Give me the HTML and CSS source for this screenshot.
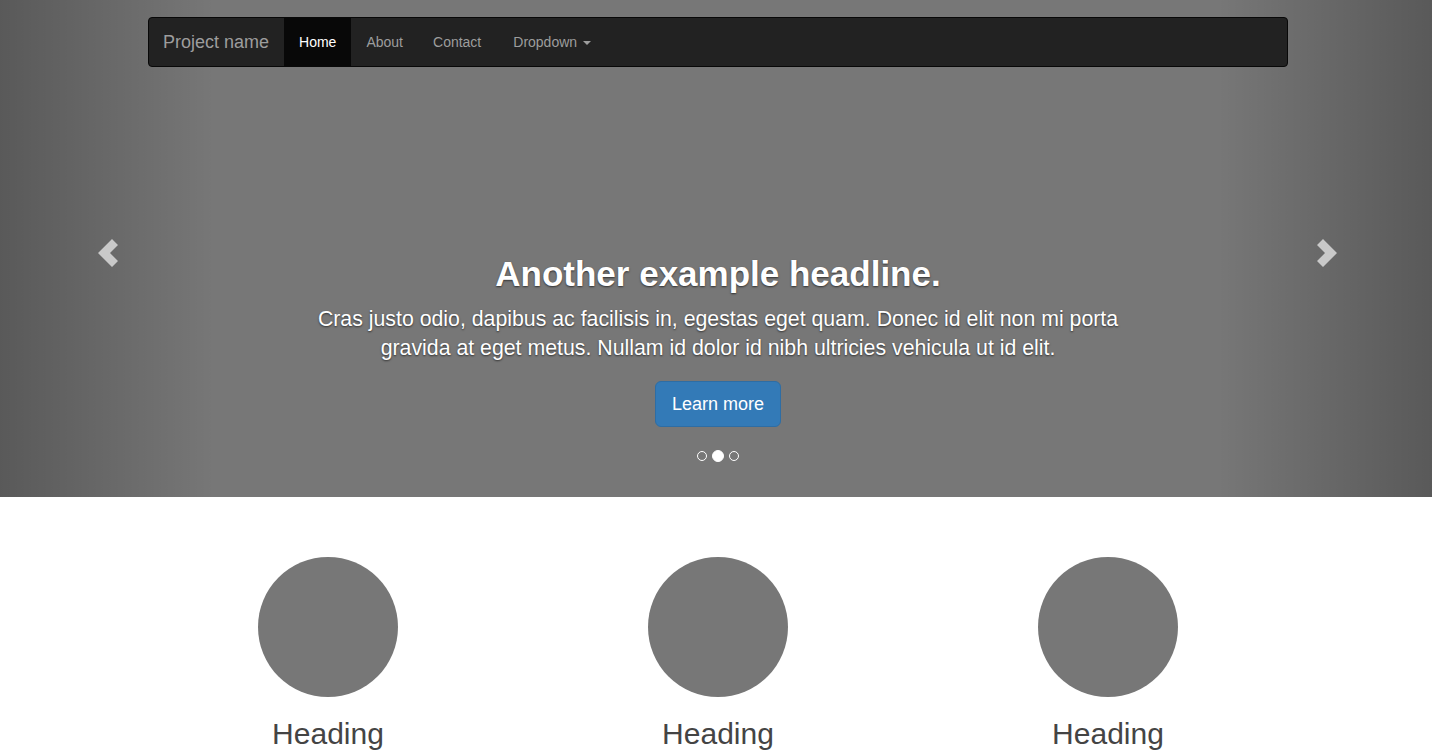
FILE: index.html
```html
<!DOCTYPE html>
<html lang="en">
<head>
<meta charset="utf-8">
<title>Carousel Template</title>
<link rel="stylesheet" href="styles.css">
</head>
<body>
<div class="navbar-wrapper">
  <div class="container">
    <nav class="navbar">
      <a class="brand" href="#">Project name</a>
      <ul class="nav">
        <li class="active"><a href="#">Home</a></li>
        <li><a href="#">About</a></li>
        <li><a href="#">Contact</a></li>
        <li><a href="#">Dropdown <span class="caret"></span></a></li>
      </ul>
    </nav>
  </div>
</div>

<div class="carousel">
  <div class="item">
    <div class="container">
      <div class="carousel-caption">
        <h1>Another example headline.</h1>
        <p>Cras justo odio, dapibus ac facilisis in, egestas eget quam. Donec id elit non mi porta gravida at eget metus. Nullam id dolor id nibh ultricies vehicula ut id elit.</p>
        <p class="actions"><a class="btn" href="#">Learn more</a></p>
      </div>
    </div>
  </div>
  <a class="control left" href="#">
    <svg width="20" height="28" viewBox="0 0 20 28"><polygon points="0,14 14,0 20,6 12,14 20,22 14,28" fill="#c9c9c9"/></svg>
  </a>
  <a class="control right" href="#">
    <svg width="20" height="28" viewBox="0 0 20 28"><polygon points="20,14 6,0 0,6 8,14 0,22 6,28" fill="#c9c9c9"/></svg>
  </a>
  <ol class="indicators">
    <li></li>
    <li class="active"></li>
    <li></li>
  </ol>
</div>

<div class="container marketing">
  <div class="row">
    <div class="col">
      <div class="circle"></div>
      <h2>Heading</h2>
      <p>Donec sed odio dui. Etiam porta sem malesuada magna mollis euismod.</p>
    </div>
    <div class="col">
      <div class="circle"></div>
      <h2>Heading</h2>
      <p>Duis mollis, est non commodo luctus, nisi erat porttitor ligula.</p>
    </div>
    <div class="col">
      <div class="circle"></div>
      <h2>Heading</h2>
      <p>Donec sed odio dui. Cras justo odio, dapibus ac facilisis in.</p>
    </div>
  </div>
</div>
</body>
</html>
```

FILE: styles.css
```css
html, body {
  margin: 0;
  padding: 0;
  overflow: hidden;
}
body {
  font-family: "Liberation Sans", Arial, sans-serif;
  font-size: 14px;
  line-height: 1.42857;
  color: #333;
  background: #fff;
}
a { text-decoration: none; }

.container {
  width: 1170px;
  margin-left: calc(50% - 583px);
  box-sizing: border-box;
}

/* Navbar */
.navbar-wrapper {
  position: absolute;
  top: 0;
  left: 0;
  right: 0;
  z-index: 20;
  padding-top: 17px;
}
.navbar-wrapper .container {
  padding: 0 15px;
}
.navbar {
  display: flex;
  align-items: stretch;
  height: 50px;
  box-sizing: border-box;
  background: #222;
  border: 1px solid #080808;
  border-radius: 4px;
}
.brand {
  font-size: 18px;
  line-height: 20px;
  padding: 14px 15px 15px 14px;
  color: #9d9d9d;
}
.nav {
  display: flex;
  list-style: none;
  margin: 0;
  padding: 0;
}
.nav li a {
  display: block;
  height: 100%;
  box-sizing: border-box;
  padding: 14px 15px;
  line-height: 20px;
  color: #9d9d9d;
}
.nav li:nth-child(3) a {
  padding-right: 17px;
}
.nav li.active a {
  background: #080808;
  color: #fff;
}
.caret {
  display: inline-block;
  width: 0;
  height: 0;
  margin-left: 2px;
  vertical-align: middle;
  border-top: 4px solid;
  border-left: 4px solid transparent;
  border-right: 4px solid transparent;
}

/* Carousel */
.carousel {
  position: relative;
  height: 497px;
  margin-bottom: 60px;
  background: #777;
}
.item {
  height: 100%;
  display: flex;
  align-items: flex-end;
}
.carousel-caption {
  margin: 0 15%;
  padding-bottom: 70px;
  text-align: center;
  color: #fff;
  text-shadow: 0 1px 2px rgba(0, 0, 0, .6);
  position: relative;
  z-index: 10;
}
.carousel-caption h1 {
  font-size: 35px;
  font-weight: 700;
  line-height: 1.1;
  margin: 0 0 12px;
}
.carousel-caption p {
  font-size: 21.3px;
  line-height: 29px;
  margin: 0;
}
.carousel-caption p.actions {
  margin-top: 18px;
  line-height: 0;
}
.btn {
  display: inline-block;
  font-size: 18px;
  line-height: 24px;
  padding: 10px 16px;
  border: 1px solid #2e6da4;
  border-radius: 6px;
  background: #337ab7;
  color: #fff;
  text-shadow: none;
}

.control {
  position: absolute;
  top: 0;
  bottom: 0;
  width: 15%;
  display: flex;
  align-items: center;
  justify-content: center;
  padding-top: 9px;
  box-sizing: border-box;
}
.control.left {
  left: 0;
  padding-left: 2px;
  background-image: linear-gradient(to right, rgba(0, 0, 0, .25), rgba(0, 0, 0, 0));
}
.control.right {
  right: 0;
  padding-left: 4px;
  background-image: linear-gradient(to left, rgba(0, 0, 0, .25), rgba(0, 0, 0, 0));
}

.indicators {
  position: absolute;
  left: 0;
  right: 0;
  bottom: 35px;
  height: 12px;
  margin: 0;
  padding: 0 0 0 4px;
  list-style: none;
  display: flex;
  justify-content: center;
  align-items: center;
  gap: 5px;
  z-index: 15;
}
.indicators li {
  width: 10px;
  height: 10px;
  box-sizing: border-box;
  border: 1px solid #fff;
  border-radius: 50%;
}
.indicators li.active {
  width: 12px;
  height: 12px;
  background: #fff;
}

/* Marketing */
.marketing {
  padding: 0 15px;
}
.row {
  display: grid;
  grid-template-columns: repeat(3, 1fr);
  margin: 0 -15px;
}
.col {
  padding: 0 15px;
  text-align: center;
}
.circle {
  width: 140px;
  height: 140px;
  border-radius: 50%;
  background: #777;
  margin: 0 auto;
}
.col h2 {
  font-size: 30px;
  font-weight: 400;
  line-height: 1.1;
  margin: 20px 0 10px;
  color: #444;
}
.col p {
  margin: 0 0 10px 0;
  padding: 0 30px;
}
```
